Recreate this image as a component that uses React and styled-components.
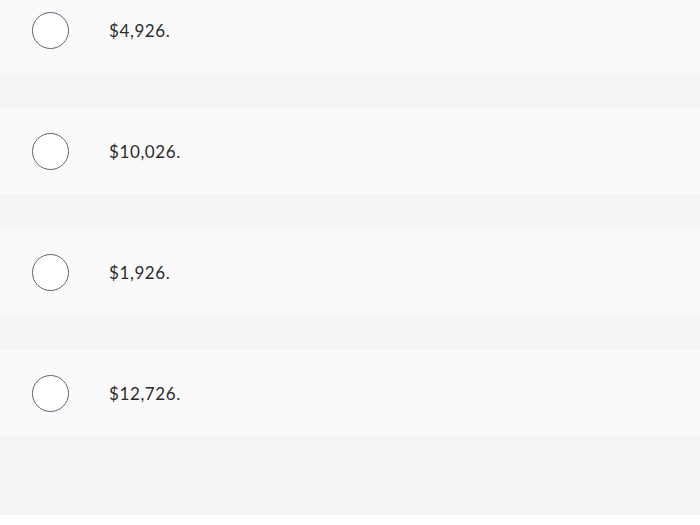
import React from "react";
import styled, { createGlobalStyle } from "styled-components";

const GlobalStyle = createGlobalStyle`
    html, body {
        margin: 0;
        padding: 0;
        background: #ffffff;
        font-family: Lato, "Open Sans", sans-serif;
    }
`;

const Viewport = styled.div`
    width: 700px;
    height: 515px;
    overflow: hidden;
    background-color: #f5f5f5;
`;

const ChoiceList = styled.div`
    display: flex;
    flex-direction: column;
    gap: 35px;
    margin-top: -13px; /* list is scrolled a little */
`;

const ChoiceRow = styled.label`
    display: flex;
    align-items: center;
    height: 86px;
    padding-left: 32px;
    background-color: #fafafa;
    box-sizing: border-box;
    cursor: pointer;
`;

const Radio = styled.span`
    width: 37px;
    height: 37px;
    box-sizing: border-box;
    border: 1.5px solid #566779;
    border-radius: 50%;
    background-color: #ffffff;
    flex-shrink: 0;
`;

const ChoiceText = styled.span`
    margin-left: 40px;
    font-size: 17px;
    color: #2b2b2b;
    letter-spacing: 0.6px;
    margin-top: 1px;
`;

const choices = ["$4,926.", "$10,026.", "$1,926.", "$12,726."];

const App = () => {
    return (
        <>
            <GlobalStyle />
            <Viewport>
                <ChoiceList>
                    {choices.map((c) => (
                        <ChoiceRow key={c}>
                            <Radio />
                            <ChoiceText>{c}</ChoiceText>
                        </ChoiceRow>
                    ))}
                </ChoiceList>
            </Viewport>
        </>
    );
};

export default App;
